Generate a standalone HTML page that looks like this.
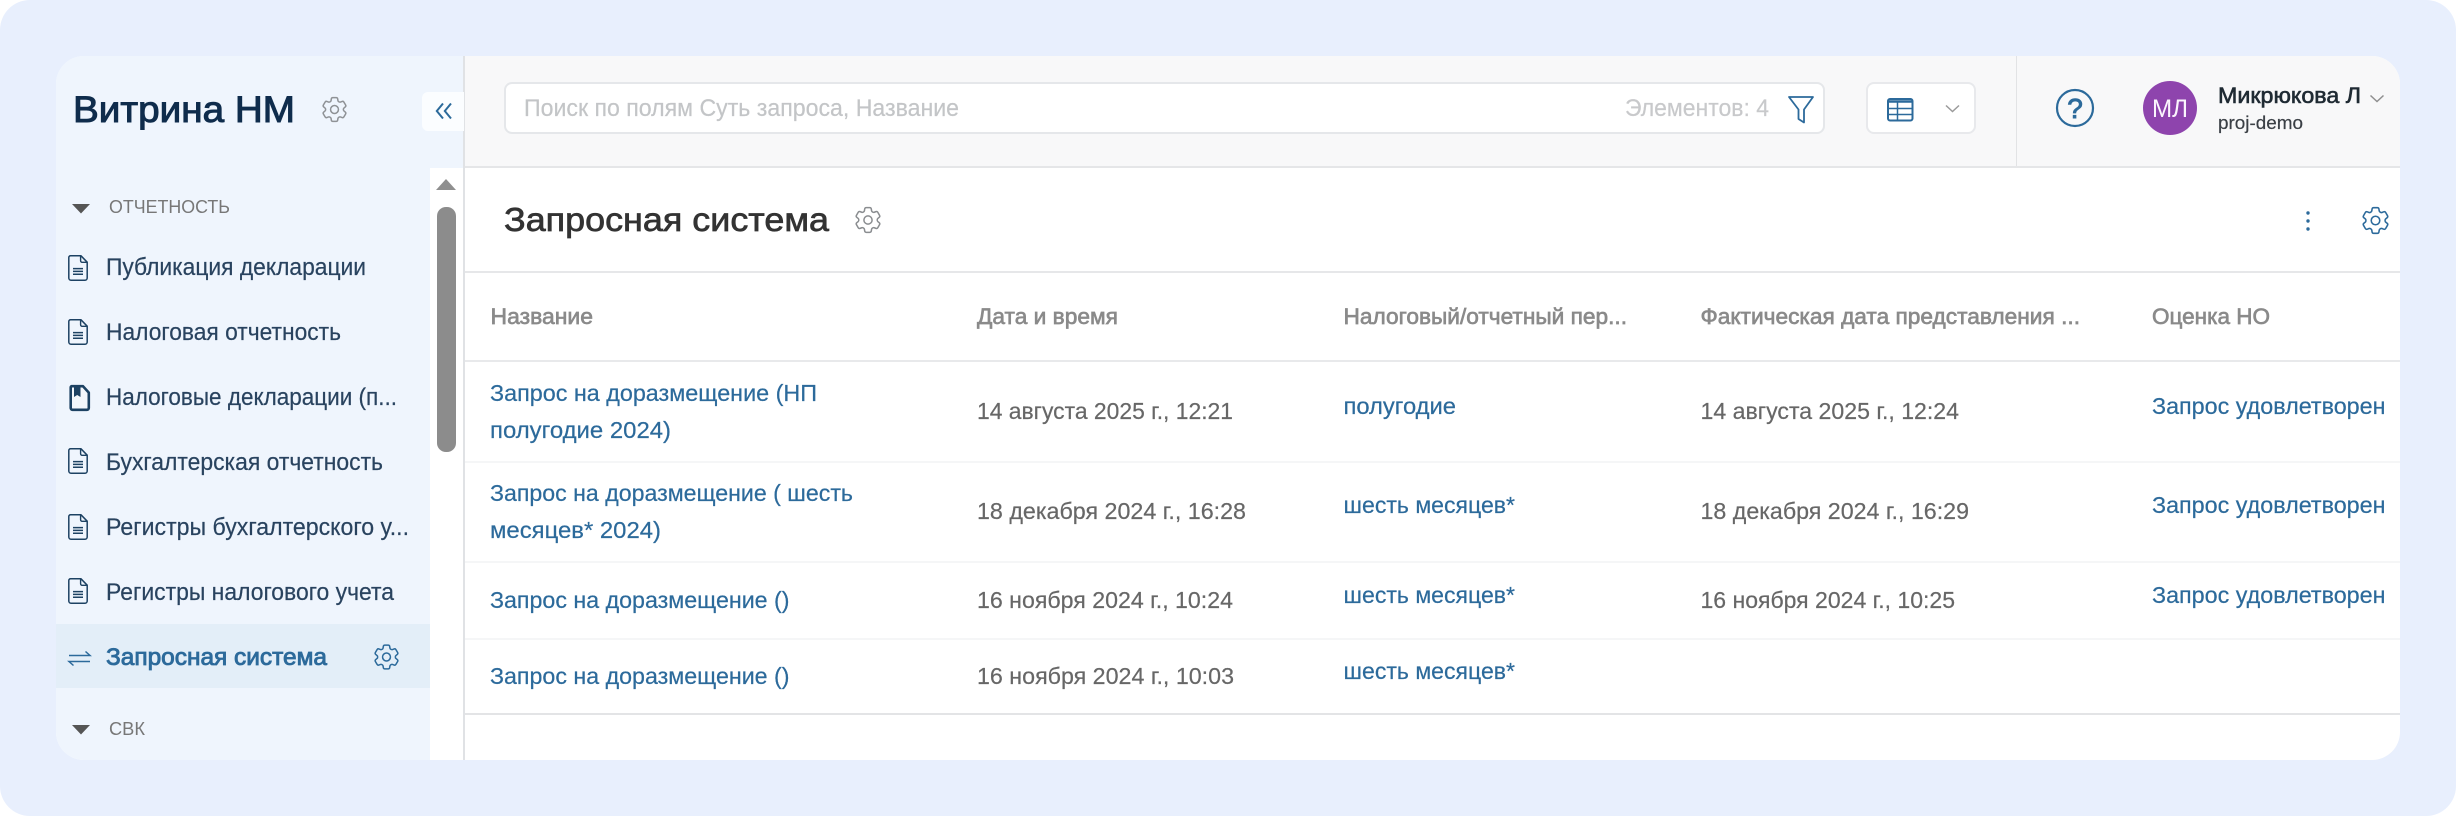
<!DOCTYPE html>
<html lang="ru">
<head>
<meta charset="utf-8">
<title>Запросная система</title>
<style>
html,body{margin:0;padding:0;background:#fff;}
body{width:2456px;height:816px;overflow:hidden;position:relative;font-family:"Liberation Sans",sans-serif;}
.a{position:absolute;box-sizing:border-box;}
svg.o{position:absolute;left:0;top:0;filter:blur(.35px);}
svg.o text{font-family:"Liberation Sans","Noto Sans CJK SC",sans-serif;white-space:pre;}
.s{font-size:24px;fill:#29435f;stroke:#29435f;stroke-width:.2px;}
.sec{font-size:18px;fill:#777;}
.lnk{font-size:23px;fill:#2c6a9b;stroke:#2c6a9b;stroke-width:.2px;}
.dt{font-size:23px;fill:#676767;stroke:#676767;stroke-width:.2px;}
.h{font-size:22px;fill:#8a8a8a;stroke:#8a8a8a;stroke-width:.65px;}
</style>
</head>
<body>
<div class="a" style="left:0;top:0;width:2456px;height:816px;background:#e8effd;border-radius:30px;"></div>
<div class="a" id="card" style="left:56px;top:56px;width:2344px;height:704px;background:#fff;border-radius:28px;overflow:hidden;">
  <div class="a" style="left:0;top:0;width:374px;height:704px;background:#eff5fd;"></div>
  <div class="a" style="left:0;top:0;width:407px;height:112px;background:#eff5fd;"></div>
  <div class="a" style="left:0;top:568px;width:374px;height:64px;background:#e3eef8;"></div>
  <div class="a" style="left:407px;top:0;width:2px;height:704px;background:#e0e2e5;"></div>
  <div class="a" style="left:366px;top:36px;width:42px;height:39px;background:#fbfdff;border-radius:6px 0 0 6px;"></div>
  <div class="a" style="left:381px;top:151px;width:19px;height:245px;background:#8c8c8c;border-radius:9px;"></div>
  <div class="a" style="left:409px;top:0;width:1935px;height:112px;background:#f8f8f9;border-bottom:2px solid #e5e6e8;"></div>
  <div class="a" style="left:1960px;top:0;width:1px;height:110px;background:#e2e3e5;"></div>
  <div class="a" style="left:448px;top:26px;width:1321px;height:52px;background:#fff;border:2px solid #e5e7ea;border-radius:8px;"></div>
  <div class="a" style="left:1810px;top:26px;width:110px;height:52px;background:#fff;border:2px solid #e8e9ec;border-radius:8px;"></div>
  <div class="a" style="left:409px;top:215px;width:1935px;height:2px;background:#e6e7e9;"></div>
  <div class="a" style="left:409px;top:304px;width:1935px;height:2px;background:#e8e9eb;"></div>
  <div class="a" style="left:409px;top:405px;width:1935px;height:2px;background:#f5f6f7;"></div>
  <div class="a" style="left:409px;top:505px;width:1935px;height:2px;background:#f5f6f7;"></div>
  <div class="a" style="left:409px;top:582px;width:1935px;height:2px;background:#f5f6f7;"></div>
  <div class="a" style="left:409px;top:657px;width:1935px;height:2px;background:#e3e4e6;"></div>
</div>

<svg class="o" width="2456" height="816" viewBox="0 0 2456 816" xmlns="http://www.w3.org/2000/svg">
  <defs>
    <symbol id="gear" viewBox="2.5 2.5 19 19" overflow="visible">
      <path fill="none" d="M9.594 3.94c.09-.542.56-.94 1.11-.94h2.593c.55 0 1.02.398 1.11.94l.213 1.281c.063.374.313.686.645.87.074.04.147.083.22.127.325.196.72.257 1.075.124l1.217-.456a1.125 1.125 0 0 1 1.37.49l1.296 2.247a1.125 1.125 0 0 1-.26 1.431l-1.003.827c-.293.241-.438.613-.43.992a7.723 7.723 0 0 1 0 .255c-.008.378.137.75.43.991l1.004.827c.424.35.534.955.26 1.43l-1.298 2.247a1.125 1.125 0 0 1-1.369.491l-1.217-.456c-.355-.133-.75-.072-1.076.124a6.47 6.47 0 0 1-.22.128c-.331.183-.581.495-.644.869l-.213 1.281c-.09.543-.56.94-1.11.94h-2.594c-.55 0-1.019-.398-1.11-.94l-.213-1.281c-.062-.374-.312-.686-.644-.87a6.52 6.52 0 0 1-.22-.127c-.325-.196-.72-.257-1.076-.124l-1.217.456a1.125 1.125 0 0 1-1.369-.49l-1.297-2.247a1.125 1.125 0 0 1 .26-1.431l1.004-.827c.292-.24.437-.613.43-.991a6.932 6.932 0 0 1 0-.255c.007-.38-.138-.751-.43-.992l-1.004-.827a1.125 1.125 0 0 1-.26-1.43l1.297-2.247a1.125 1.125 0 0 1 1.37-.491l1.216.456c.356.133.751.072 1.076-.124.072-.044.146-.086.22-.128.332-.183.582-.495.644-.869l.214-1.28Z"/>
      <circle cx="12" cy="12" r="3" fill="none"/>
    </symbol>
    <symbol id="doc" viewBox="0 0 20 26" overflow="visible">
      <path fill="none" stroke="#1d4263" stroke-width="1.5" stroke-linejoin="round" d="M2.5 .8H13L19.2 7.2V23a2.2 2.2 0 0 1-2.2 2.2H3A2.2 2.2 0 0 1 .8 23V2.5A1.7 1.7 0 0 1 2.5 .8Z"/>
      <path fill="none" stroke="#1d4263" stroke-width="1.4" d="M12.6 1V5.8A1.5 1.5 0 0 0 14.1 7.3H19"/>
      <path stroke="#1d4263" stroke-width="1.5" d="M5 13.6H15M5 16.4H15M5 19.2H15"/>
    </symbol>
  </defs>

  <!-- sidebar header -->
  <text x="73" y="122" font-size="37" fill="#0f2c4c" stroke="#0f2c4c" stroke-width="1" textLength="222" lengthAdjust="spacingAndGlyphs">Витрина НМ</text>
  <use href="#gear" x="322" y="97" width="25" height="25" stroke="#8f9296" stroke-width="1.15"/>
  <path d="M443 103.500 436.800 111 443 118.500M451 103.500 444.800 111 451 118.500" fill="none" stroke="#2c6a9b" stroke-width="2"/>

  <!-- scrollbar arrow -->
  <path d="M436 190H456L446 179Z" fill="#8f8f8f"/>

  <!-- section -->
  <path d="M72 204H90L81 213.500Z" fill="#555"/>
  <text class="sec" x="109" y="213" textLength="121" lengthAdjust="spacingAndGlyphs">ОТЧЕТНОСТЬ</text>

  <!-- sidebar items -->
  <use href="#doc" x="68" y="255" width="20" height="26"/>
  <text class="s" x="106" y="275" textLength="260" lengthAdjust="spacingAndGlyphs">Публикация декларации</text>
  <use href="#doc" x="68" y="319" width="20" height="26"/>
  <text class="s" x="106" y="340" textLength="235" lengthAdjust="spacingAndGlyphs">Налоговая отчетность</text>
  <path d="M71.500 386.200H83L88.800 392.600V408A1.800 1.800 0 0 1 87 409.800H72.500A1.800 1.800 0 0 1 70.700 408V387.500A1.500 1.500 0 0 1 71.500 386.200Z" fill="#f3f7fc" stroke="#1d4263" stroke-width="2.600" stroke-linejoin="round"/>
  <path d="M74 386H80.500V397L77.200 395 74 397Z" fill="#1d4263"/>
  <text class="s" x="106" y="405" textLength="291" lengthAdjust="spacingAndGlyphs">Налоговые декларации (п...</text>
  <use href="#doc" x="68" y="448" width="20" height="26"/>
  <text class="s" x="106" y="470" textLength="277" lengthAdjust="spacingAndGlyphs">Бухгалтерская отчетность</text>
  <use href="#doc" x="68" y="514" width="20" height="26"/>
  <text class="s" x="106" y="535" textLength="303" lengthAdjust="spacingAndGlyphs">Регистры бухгалтерского у...</text>
  <use href="#doc" x="68" y="578" width="20" height="26"/>
  <text class="s" x="106" y="600" textLength="288" lengthAdjust="spacingAndGlyphs">Регистры налогового учета</text>
  <path d="M69 655.500H90L85.500 651.500M90 661.500H69L73.500 665.500" fill="none" stroke="#2c6a9b" stroke-width="1.500"/>
  <text x="106" y="665" font-size="24" fill="#2c6a9b" stroke="#2c6a9b" stroke-width=".85" textLength="221" lengthAdjust="spacingAndGlyphs">Запросная система</text>
  <use href="#gear" x="374" y="644" width="25" height="26" stroke="#2c6a9b" stroke-width="1.15"/>
  <path d="M72 725H90L81 734.500Z" fill="#555"/>
  <text class="sec" x="109" y="735" textLength="36" lengthAdjust="spacingAndGlyphs">СВК</text>

  <!-- toolbar -->
  <text x="524" y="116" font-size="24" fill="#c3c5c7" stroke="#c3c5c7" stroke-width=".2" textLength="435" lengthAdjust="spacingAndGlyphs">Поиск по полям Суть запроса, Название</text>
  <text x="1625" y="116" font-size="24" fill="#c8c9cb" stroke="#c8c9cb" stroke-width=".2" textLength="144" lengthAdjust="spacingAndGlyphs">Элементов: 4</text>
  <path d="M1789 97H1813L1804 109.500V122.500L1798.500 119V109.500Z" fill="none" stroke="#2c6a9b" stroke-width="1.800" stroke-linejoin="round"/>
  <rect x="1888" y="99" width="24.500" height="21.500" rx="2" fill="none" stroke="#2c6a9b" stroke-width="2"/>
  <path d="M1888 101.500H1912.500" stroke="#2c6a9b" stroke-width="2.500"/>
  <path d="M1888 108.500H1912.500M1888 114.500H1912.500M1897.500 102V120" stroke="#2c6a9b" stroke-width="1.500"/>
  <path d="M1946 105.500 1952.500 111.500 1959 105.500" fill="none" stroke="#9a9a9a" stroke-width="1.500"/>
  <circle cx="2075" cy="108" r="18" fill="none" stroke="#2c6a9b" stroke-width="2.200"/>
  <text x="2075" y="118" font-size="28" fill="#2c6a9b" stroke="#2c6a9b" stroke-width=".9" text-anchor="middle">?</text>
  <circle cx="2170" cy="108" r="27" fill="#8e44ad"/>
  <text x="2152" y="117" font-size="25" fill="#fbf5fd" textLength="36" lengthAdjust="spacingAndGlyphs">МЛ</text>
  <text x="2218" y="103" font-size="22" fill="#1f2a33" stroke="#1f2a33" stroke-width=".6" textLength="143" lengthAdjust="spacingAndGlyphs">Микрюкова Л</text>
  <path d="M2370.500 95.500 2377 101.500 2383.500 95.500" fill="none" stroke="#8f8f8f" stroke-width="1.500"/>
  <text x="2218" y="129" font-size="18.500" fill="#3a3f45" stroke="#3a3f45" stroke-width=".2" textLength="85" lengthAdjust="spacingAndGlyphs">proj-demo</text>

  <!-- page title -->
  <text x="504" y="231" font-size="33.500" fill="#333" stroke="#333" stroke-width=".7" textLength="325" lengthAdjust="spacingAndGlyphs">Запросная система</text>
  <use href="#gear" x="855" y="207" width="26" height="26" stroke="#8a8d90" stroke-width="1.100"/>
  <circle cx="2308" cy="213" r="1.700" fill="#2c6a9b"/><circle cx="2308" cy="221" r="1.700" fill="#2c6a9b"/><circle cx="2308" cy="229" r="1.700" fill="#2c6a9b"/>
  <use href="#gear" x="2362" y="207" width="27" height="27" stroke="#2c6a9b" stroke-width="1.100"/>

  <!-- table header -->
  <text class="h" x="490.500" y="324" textLength="102.500" lengthAdjust="spacingAndGlyphs">Название</text>
  <text class="h" x="977" y="324" textLength="141" lengthAdjust="spacingAndGlyphs">Дата и время</text>
  <text class="h" x="1343.500" y="324" textLength="283.500" lengthAdjust="spacingAndGlyphs">Налоговый/отчетный пер...</text>
  <text class="h" x="1700.500" y="324" textLength="379.500" lengthAdjust="spacingAndGlyphs">Фактическая дата представления ...</text>
  <text class="h" x="2152" y="324" textLength="118" lengthAdjust="spacingAndGlyphs">Оценка НО</text>

  <!-- row 1 -->
  <text class="lnk" x="490" y="401" textLength="327" lengthAdjust="spacingAndGlyphs">Запрос на доразмещение (НП</text>
  <text class="lnk" x="490" y="438" textLength="181" lengthAdjust="spacingAndGlyphs">полугодие 2024)</text>
  <text class="dt" x="977" y="419" textLength="256" lengthAdjust="spacingAndGlyphs">14 августа 2025 г., 12:21</text>
  <text class="lnk" x="1343.500" y="414" textLength="112.500" lengthAdjust="spacingAndGlyphs">полугодие</text>
  <text class="dt" x="1700.500" y="419" textLength="258.500" lengthAdjust="spacingAndGlyphs">14 августа 2025 г., 12:24</text>
  <text class="lnk" x="2152" y="414" textLength="233.500" lengthAdjust="spacingAndGlyphs">Запрос удовлетворен</text>

  <!-- row 2 -->
  <text class="lnk" x="490" y="501" textLength="363" lengthAdjust="spacingAndGlyphs">Запрос на доразмещение ( шесть</text>
  <text class="lnk" x="490" y="538" textLength="171" lengthAdjust="spacingAndGlyphs">месяцев* 2024)</text>
  <text class="dt" x="977" y="519" textLength="269" lengthAdjust="spacingAndGlyphs">18 декабря 2024 г., 16:28</text>
  <text class="lnk" x="1343.500" y="513" textLength="171.500" lengthAdjust="spacingAndGlyphs">шесть месяцев*</text>
  <text class="dt" x="1700.500" y="519" textLength="268.500" lengthAdjust="spacingAndGlyphs">18 декабря 2024 г., 16:29</text>
  <text class="lnk" x="2152" y="513" textLength="233.500" lengthAdjust="spacingAndGlyphs">Запрос удовлетворен</text>

  <!-- row 3 -->
  <text class="lnk" x="490" y="608" textLength="299.500" lengthAdjust="spacingAndGlyphs">Запрос на доразмещение ()</text>
  <text class="dt" x="977" y="608" textLength="256" lengthAdjust="spacingAndGlyphs">16 ноября 2024 г., 10:24</text>
  <text class="lnk" x="1343.500" y="603" textLength="171.500" lengthAdjust="spacingAndGlyphs">шесть месяцев*</text>
  <text class="dt" x="1700.500" y="608" textLength="254.500" lengthAdjust="spacingAndGlyphs">16 ноября 2024 г., 10:25</text>
  <text class="lnk" x="2152" y="603" textLength="233.500" lengthAdjust="spacingAndGlyphs">Запрос удовлетворен</text>

  <!-- row 4 -->
  <text class="lnk" x="490" y="684" textLength="299.500" lengthAdjust="spacingAndGlyphs">Запрос на доразмещение ()</text>
  <text class="dt" x="977" y="684" textLength="257" lengthAdjust="spacingAndGlyphs">16 ноября 2024 г., 10:03</text>
  <text class="lnk" x="1343.500" y="679" textLength="171.500" lengthAdjust="spacingAndGlyphs">шесть месяцев*</text>
</svg>
</body>
</html>
